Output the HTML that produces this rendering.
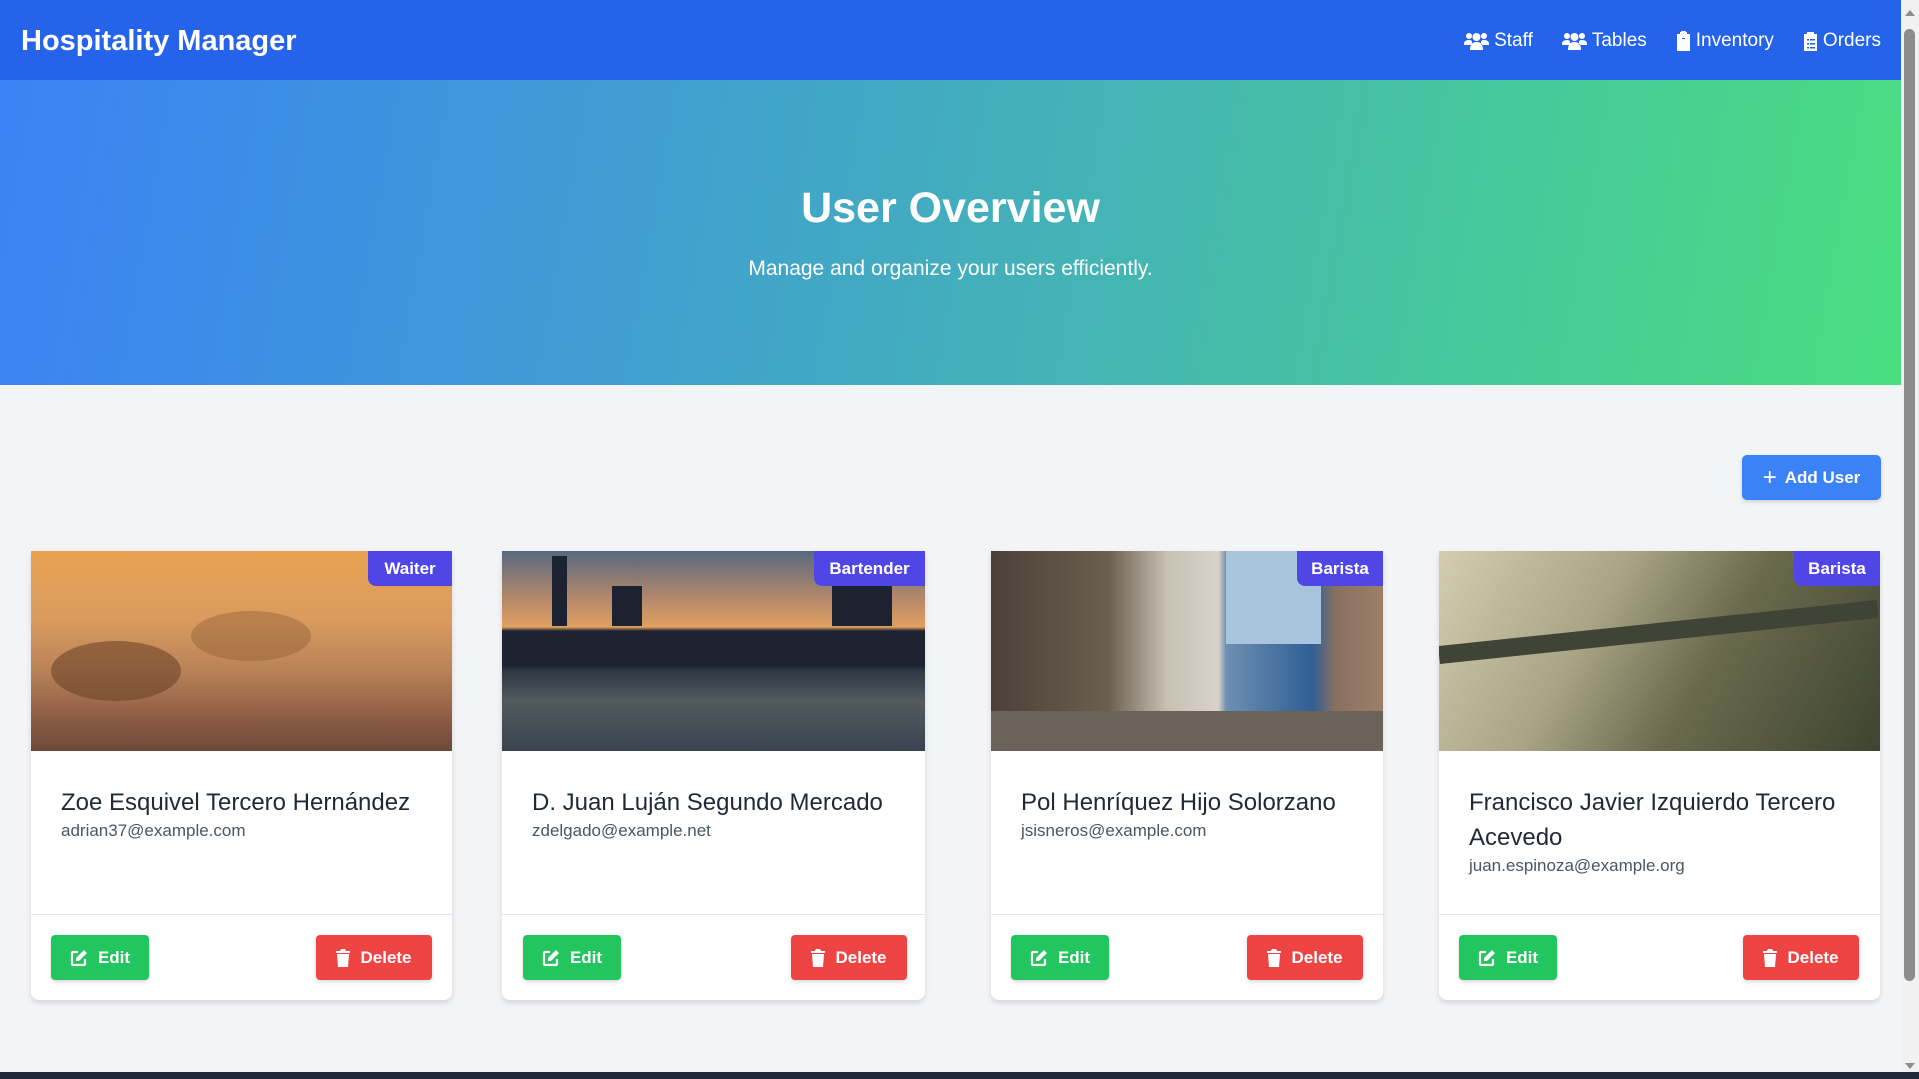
<!DOCTYPE html>
<html><head><meta charset="utf-8"><style>
*{margin:0;padding:0;box-sizing:border-box}
body{width:1919px;height:1079px;overflow:hidden;background:#f3f4f6;font-family:"Liberation Sans",sans-serif;position:relative}
.hdr{position:absolute;left:0;top:0;width:1901px;height:80px;background:#2563eb;color:#fff}
.logo{position:absolute;left:21px;top:25px;font-size:29px;font-weight:bold}
.nav{position:absolute;right:20px;top:30px;display:flex;gap:29px;font-size:19px}
.nav span{display:flex;align-items:center;gap:5px}
.hero{position:absolute;left:0;top:80px;width:1901px;height:305px;background:linear-gradient(100deg,#3b82f6 0%,#42a8c4 45%,#4ade80 100%);color:#fff;text-align:center}
.hero h1{position:absolute;left:0;right:0;top:104px;font-size:43px;font-weight:bold}
.hero p{position:absolute;left:0;right:0;top:177px;font-size:21px}
.add{position:absolute;left:1742px;top:455px;width:139px;height:45px;background:#3b82f6;border-radius:5px;color:#fff;font-size:17px;font-weight:bold;display:flex;align-items:center;justify-content:center;gap:8px;box-shadow:0 2px 4px rgba(0,0,0,.15)}
.card{position:absolute;top:551px;height:449px;background:#fff;border-radius:0 0 8px 8px;box-shadow:0 3px 6px rgba(0,0,0,.12);overflow:hidden}
.img{position:absolute;left:0;top:0;right:0;height:200px;overflow:hidden}
.badge{position:absolute;right:0;top:0;height:35px;background:#4f46e5;color:#fff;font-weight:bold;font-size:17px;border-radius:0 0 0 8px;display:flex;align-items:center;justify-content:center}
.name{position:absolute;left:30px;top:234px;font-size:24px;color:#1f2937;line-height:35px}
.email{position:absolute;left:30px;font-size:17px;color:#4b5563}
.div{position:absolute;left:0;right:0;top:363px;height:1px;background:#e5e7eb}
.btn{position:absolute;top:384px;height:45px;border-radius:4px;color:#fff;font-weight:bold;font-size:17px;display:flex;align-items:center;justify-content:center;gap:10px;box-shadow:0 2px 4px rgba(0,0,0,.15)}
.edit{background:#22c55e;width:98px}
.del{background:#ef4444;width:116px}
.sb{position:absolute;left:1901px;top:0;width:18px;height:1072px;background:#f1f1f1}
.thumb{position:absolute;left:1904px;top:29px;width:11px;height:952px;background:#8c8c8c;border-radius:6px}
.foot{position:absolute;left:0;top:1072px;width:1919px;height:7px;background:#1f2937}
</style></head><body>
<svg width="0" height="0" style="position:absolute"><defs>
<symbol id="ed" viewBox="0 0 18 18"><path d="M8 3H3a1 1 0 0 0-1 1v11a1 1 0 0 0 1 1h11a1 1 0 0 0 1-1v-5" fill="none" stroke="#fff" stroke-width="2.2"/><path d="M14 1l3 3-8 8H6V9z" fill="#fff"/></symbol>
<symbol id="tr" viewBox="0 0 14 18"><path d="M0 2h4l1-2h4l1 2h4v2H0z M1 5h12l-1 13H2z" fill="#fff"/></symbol>
</defs></svg>
<div class="hdr"><div class="logo">Hospitality Manager</div>
<div class="nav">
<span><svg width="25" height="18" viewBox="0 0 25 18" fill="#fff"><circle cx="5" cy="4" r="3"/><circle cx="20" cy="4" r="3"/><circle cx="12.5" cy="5" r="4"/><path d="M0 12q0-4 5-4q3 0 3 2v3H0z M25 12q0-4-5-4q-3 0-3 2v3h8z M6 18q0-8 6.5-8t6.5 8z"/></svg>Staff</span>
<span><svg width="25" height="18" viewBox="0 0 25 18" fill="#fff"><circle cx="5" cy="4" r="3"/><circle cx="20" cy="4" r="3"/><circle cx="12.5" cy="5" r="4"/><path d="M0 12q0-4 5-4q3 0 3 2v3H0z M25 12q0-4-5-4q-3 0-3 2v3h8z M6 18q0-8 6.5-8t6.5 8z"/></svg>Tables</span>
<span><svg width="15" height="20" viewBox="0 0 15 20" fill="#fff"><path d="M1 3h3V1h7v2h3v17H1z"/><rect x="5" y="0" width="5" height="4" rx="1"/><rect x="6" y="7" width="3" height="1" fill="#2563eb"/></svg>Inventory</span>
<span><svg width="15" height="20" viewBox="0 0 15 20" fill="#fff"><path d="M1 3h3V1h7v2h3v17H1z"/><g fill="#2563eb"><rect x="4" y="8" width="2" height="1.5"/><rect x="7" y="8" width="5" height="1.5"/><rect x="4" y="12" width="2" height="1.5"/><rect x="7" y="12" width="5" height="1.5"/><rect x="4" y="16" width="2" height="1.5"/><rect x="7" y="16" width="5" height="1.5"/></g></svg>Orders</span>
</div></div>
<div class="hero"><h1>User Overview</h1><p>Manage and organize your users efficiently.</p></div>
<div class="add"><span style="font-size:24px;font-weight:normal;line-height:1">+</span>Add User</div>

<div class="card" style="left:31px;width:421px">
<div class="img" style="background:linear-gradient(180deg,#e9a252 0%,#d99b5e 35%,#b98257 60%,#8a5a44 85%,#6e4a3a 100%)"><div style="position:absolute;left:20px;top:90px;width:130px;height:60px;border-radius:50%;background:#6d4528;opacity:.6"></div><div style="position:absolute;left:160px;top:60px;width:120px;height:50px;border-radius:50%;background:#8a5a34;opacity:.4"></div></div>
<div class="badge" style="width:84px">Waiter</div>
<div class="name">Zoe Esquivel Tercero Hernández</div><div class="email" style="top:270px">adrian37@example.com</div>
<div class="div"></div>
<div class="btn edit" style="left:20px"><svg width="18" height="18"><use href="#ed"/></svg>Edit</div><div class="btn del" style="left:285px"><svg width="14" height="18"><use href="#tr"/></svg>Delete</div></div>

<div class="card" style="left:502px;width:423px">
<div class="img" style="background:linear-gradient(180deg,#57687e 0%,#b98a6a 25%,#e0a060 38%,#1d2230 40%,#1d2230 57%,#2f3844 60%,#525a5e 75%,#3a4450 100%)"><div style="position:absolute;left:50px;top:5px;width:15px;height:70px;background:#1d2230"></div><div style="position:absolute;left:110px;top:35px;width:30px;height:40px;background:#1d2230"></div><div style="position:absolute;left:330px;top:35px;width:60px;height:40px;background:#1d2230"></div></div>
<div class="badge" style="width:111px">Bartender</div>
<div class="name">D. Juan Luján Segundo Mercado</div><div class="email" style="top:270px">zdelgado@example.net</div>
<div class="div"></div>
<div class="btn edit" style="left:21px"><svg width="18" height="18"><use href="#ed"/></svg>Edit</div><div class="btn del" style="left:289px"><svg width="14" height="18"><use href="#tr"/></svg>Delete</div></div>

<div class="card" style="left:991px;width:392px">
<div class="img" style="background:linear-gradient(90deg,#4a4036 0%,#6a6050 30%,#c8c2b4 45%,#d8d2c8 58%,#6d8fb2 60%,#2f5f94 82%,#8a7060 88%,#9b7f68 100%)"><div style="position:absolute;left:0;top:160px;width:392px;height:40px;background:#6b625a"></div><div style="position:absolute;left:235px;top:0;width:95px;height:93px;background:#a9c4dd"></div></div>
<div class="badge" style="width:86px">Barista</div>
<div class="name">Pol Henríquez Hijo Solorzano</div><div class="email" style="top:270px">jsisneros@example.com</div>
<div class="div"></div>
<div class="btn edit" style="left:20px"><svg width="18" height="18"><use href="#ed"/></svg>Edit</div><div class="btn del" style="left:256px"><svg width="14" height="18"><use href="#tr"/></svg>Delete</div></div>

<div class="card" style="left:1439px;width:441px">
<div class="img" style="background:linear-gradient(120deg,#d4cdb0 0%,#a9a486 35%,#6b6a4d 60%,#3d4430 100%)"><div style="position:absolute;left:0;top:95px;width:441px;height:18px;background:#3f4436;transform:rotate(-6deg);transform-origin:left"></div></div>
<div class="badge" style="width:86px">Barista</div>
<div class="name">Francisco Javier Izquierdo Tercero<br>Acevedo</div><div class="email" style="top:305px">juan.espinoza@example.org</div>
<div class="div"></div>
<div class="btn edit" style="left:20px"><svg width="18" height="18"><use href="#ed"/></svg>Edit</div><div class="btn del" style="left:304px"><svg width="14" height="18"><use href="#tr"/></svg>Delete</div></div>

<div class="sb"></div><div class="thumb"></div>
<div style="position:absolute;left:1905px;top:10px;width:0;height:0;border-left:5px solid transparent;border-right:5px solid transparent;border-bottom:6px solid #8c8c8c"></div>
<div style="position:absolute;left:1905px;top:1063px;width:0;height:0;border-left:5px solid transparent;border-right:5px solid transparent;border-top:6px solid #8c8c8c"></div>
<div class="foot"></div>
</body></html>
